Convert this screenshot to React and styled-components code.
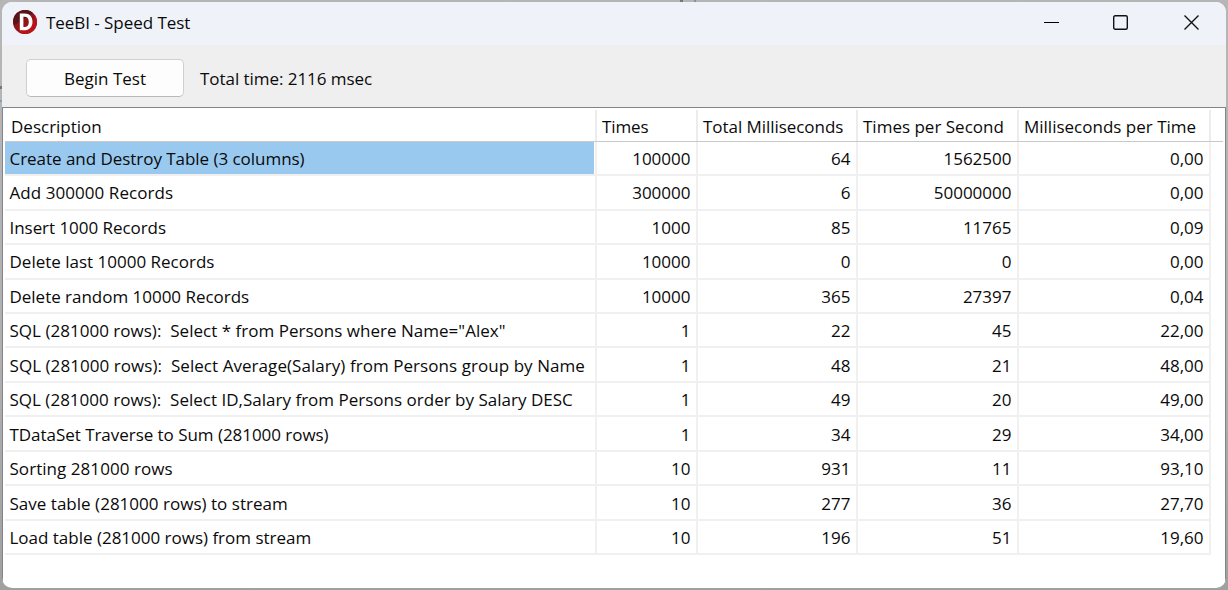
import React from "react";
import styled, { createGlobalStyle } from "styled-components";

const GlobalStyle = createGlobalStyle`
  * { box-sizing: border-box; }
  html, body { margin: 0; height: 100%; overflow: hidden; }
  body { font-family: "Open Sans", "Noto Sans", sans-serif; font-size: 17px; color: #0a0a0a; }
`;

const Desktop = styled.div`
  width: 1228px;
  height: 590px;
  padding: 2px;
  background:
    linear-gradient(#777, #777) 680px 0 / 3px 2px no-repeat,
    linear-gradient(#7f93ab, #7f93ab) 694px 0 / 2px 2px no-repeat,
    linear-gradient(#777, #777) 0 86px / 2px 3px no-repeat,
    linear-gradient(#7fa0bd, #7fa0bd) 0 100px / 2px 2px no-repeat,
    linear-gradient(#b6b6b6, #b0b0b0 60%, #a0a0a0);
  overflow: hidden;
`;

const Window = styled.div`
  width: 1224px;
  height: 586px;
  display: flex;
  flex-direction: column;
  background: #fff;
  border-radius: 10px;
  overflow: hidden;
`;

const TitleBar = styled.header`
  height: 43px;
  flex: none;
  display: flex;
  align-items: flex-start;
  padding-left: 11px;
  background: #eff3f9;
`;

const Logo = styled.svg`
  width: 24px;
  height: 24px;
  margin-top: 8px;
`;

const Title = styled.div`
  flex: 1;
  margin-left: 9px;
  line-height: 42px;
  white-space: pre;
`;

const Controls = styled.div`
  display: flex;
  height: 41px;
`;

const ControlButton = styled.button`
  width: ${(p) => p.$w}px;
  padding: 0;
  border: 0;
  background: none;
  display: flex;
  align-items: center;
  justify-content: center;
  svg { display: block; }
`;

const Toolbar = styled.div`
  height: 62px;
  flex: none;
  display: flex;
  align-items: flex-start;
  padding: 14px 0 0 24px;
  background: #efefef;
`;

const BeginButton = styled.button`
  width: 158px;
  height: 38px;
  padding: 0;
  border: 1px solid #d0d0d0;
  border-bottom-color: #b8b8b8;
  border-radius: 5px;
  background: #fdfdfd;
  font: inherit;
  color: inherit;
`;

const Total = styled.div`
  margin-left: 16px;
  line-height: 40px;
`;

const Text = styled.span`
  white-space: pre;
  letter-spacing: ${(p) => p.$ls || 0}px;
`;

const Grid = styled.div`
  flex: 1;
  border: solid #83838b;
  border-width: 1px 1px 0 1px;
  padding: 2px 2px 0 2px;
`;

const columns = "592px 101px 160px 161px 192px";

const HeaderRow = styled.div`
  display: grid;
  grid-template-columns: ${columns};
  height: 32px;
  border-bottom: 1px solid #c8c8c8;
`;

const HeaderCell = styled.div`
  border-right: 2px solid #ececec;
  padding-left: 5px;
  line-height: 34px;
  height: 31px;
  &:first-child { padding-left: 6px; }
`;

const Row = styled.div`
  display: grid;
  grid-template-columns: ${columns};
  grid-template-rows: 100%;
  width: 1206px;
  height: ${(p) => p.$h}px;
`;

const Cell = styled.div`
  border: solid #f0f0f0;
  border-width: 0 2px 2px 0;
  padding: 0 5.500px 0 4.500px;
  line-height: ${(p) => p.$lh}px;
  text-align: ${(p) => (p.$right ? "right" : "left")};
  background: ${(p) => (p.$selected ? "linear-gradient(to right, #99c9ef 589px, #fff 589px)" : "#fff")};
  white-space: pre;
`;

const headers = [
  ["Description", 0],
  ["Times", -0.1],
  ["Total Milliseconds", -0.05],
  ["Times per Second", 0],
  ["Milliseconds per Time", 0],
];

const rows = [
  ["Create and Destroy Table (3 columns)", "100000", "64", "1562500", "0,00", 34, -0.04],
  ["Add 300000 Records", "300000", "6", "50000000", "0,00", 35, 0.06],
  ["Insert 1000 Records", "1000", "85", "11765", "0,09", 34, -0.05],
  ["Delete last 10000 Records", "10000", "0", "0", "0,00", 35, 0],
  ["Delete random 10000 Records", "10000", "365", "27397", "0,04", 34, -0.02],
  ['SQL (281000 rows):  Select * from Persons where Name="Alex"', "1", "22", "45", "22,00", 34, 0.02],
  ["SQL (281000 rows):  Select Average(Salary) from Persons group by Name", "1", "48", "21", "48,00", 35, 0.055],
  ["SQL (281000 rows):  Select ID,Salary from Persons order by Salary DESC", "1", "49", "20", "49,00", 34, 0.01],
  ["TDataSet Traverse to Sum (281000 rows)", "1", "34", "29", "34,00", 35, -0.04],
  ["Sorting 281000 rows", "10", "931", "11", "93,10", 34, 0.05],
  ["Save table (281000 rows) to stream", "10", "277", "36", "27,70", 35, 0.02],
  ["Load table (281000 rows) from stream", "10", "196", "51", "19,60", 34, -0.01],
];

export default function App() {
  return (
    <Desktop>
      <GlobalStyle />
      <Window>
        <TitleBar>
          <Logo viewBox="0 0 24 24">
            <circle cx="12" cy="12" r="12" fill="#8f141b" />
            <path d="M0 12A12 12 0 0 1 20 3L1 15.500Z" fill="#5a1419" />
            <path d="M5 21.700C12 20 18 17 22.500 6A12 12 0 0 1 5 21.700Z" fill="#b8121a" />
            <path fillRule="evenodd" fill="#fff" d="M6.800 3.600h4.700c5.200 0 8 3.200 8 8.100 0 5.300-3.200 8.600-8.500 8.600H6.800ZM10.400 6.800v10.300h1.100c2.800 0 4.300-1.900 4.300-5.200 0-3.300-1.500-5.100-4.300-5.100Z" />
          </Logo>
          <Title><Text $ls={-0.05}>TeeBI - Speed Test</Text></Title>
          <Controls>
            <ControlButton $w={65} aria-label="Minimize">
              <svg width="15" height="15" viewBox="0 0 15 15"><path d="M0 7.500h15" stroke="#000" /></svg>
            </ControlButton>
            <ControlButton $w={73} aria-label="Maximize">
              <svg width="15" height="15" viewBox="0 0 15 15"><rect x=".7" y=".7" width="13.600" height="13.600" rx="1.500" fill="none" stroke="#111" strokeWidth="1.400" /></svg>
            </ControlButton>
            <ControlButton $w={69} aria-label="Close">
              <svg width="15" height="15" viewBox="0 0 15 15"><path d="M.5.500l14 14M14.500.500l-14 14" stroke="#111" strokeWidth="1.400" /></svg>
            </ControlButton>
          </Controls>
        </TitleBar>
        <Toolbar>
          <BeginButton><Text>Begin Test</Text></BeginButton>
          <Total><Text $ls={-0.05}>Total time: 2116 msec</Text></Total>
        </Toolbar>
        <Grid>
          <HeaderRow>
            {headers.map(([t, ls]) => (
              <HeaderCell key={t}><Text $ls={ls}>{t}</Text></HeaderCell>
            ))}
          </HeaderRow>
          {rows.map(([d, a, b, c, e, h, ls], i) => {
            const lh = i === 0 ? 33 : h === 35 && i > 5 ? 35 : 34;
            return (
              <Row key={d} $h={h}>
                <Cell $lh={lh} $selected={i === 0}><Text $ls={ls}>{d}</Text></Cell>
                <Cell $lh={lh} $right>{a}</Cell>
                <Cell $lh={lh} $right>{b}</Cell>
                <Cell $lh={lh} $right>{c}</Cell>
                <Cell $lh={lh} $right>{e}</Cell>
              </Row>
            );
          })}
        </Grid>
      </Window>
    </Desktop>
  );
}
